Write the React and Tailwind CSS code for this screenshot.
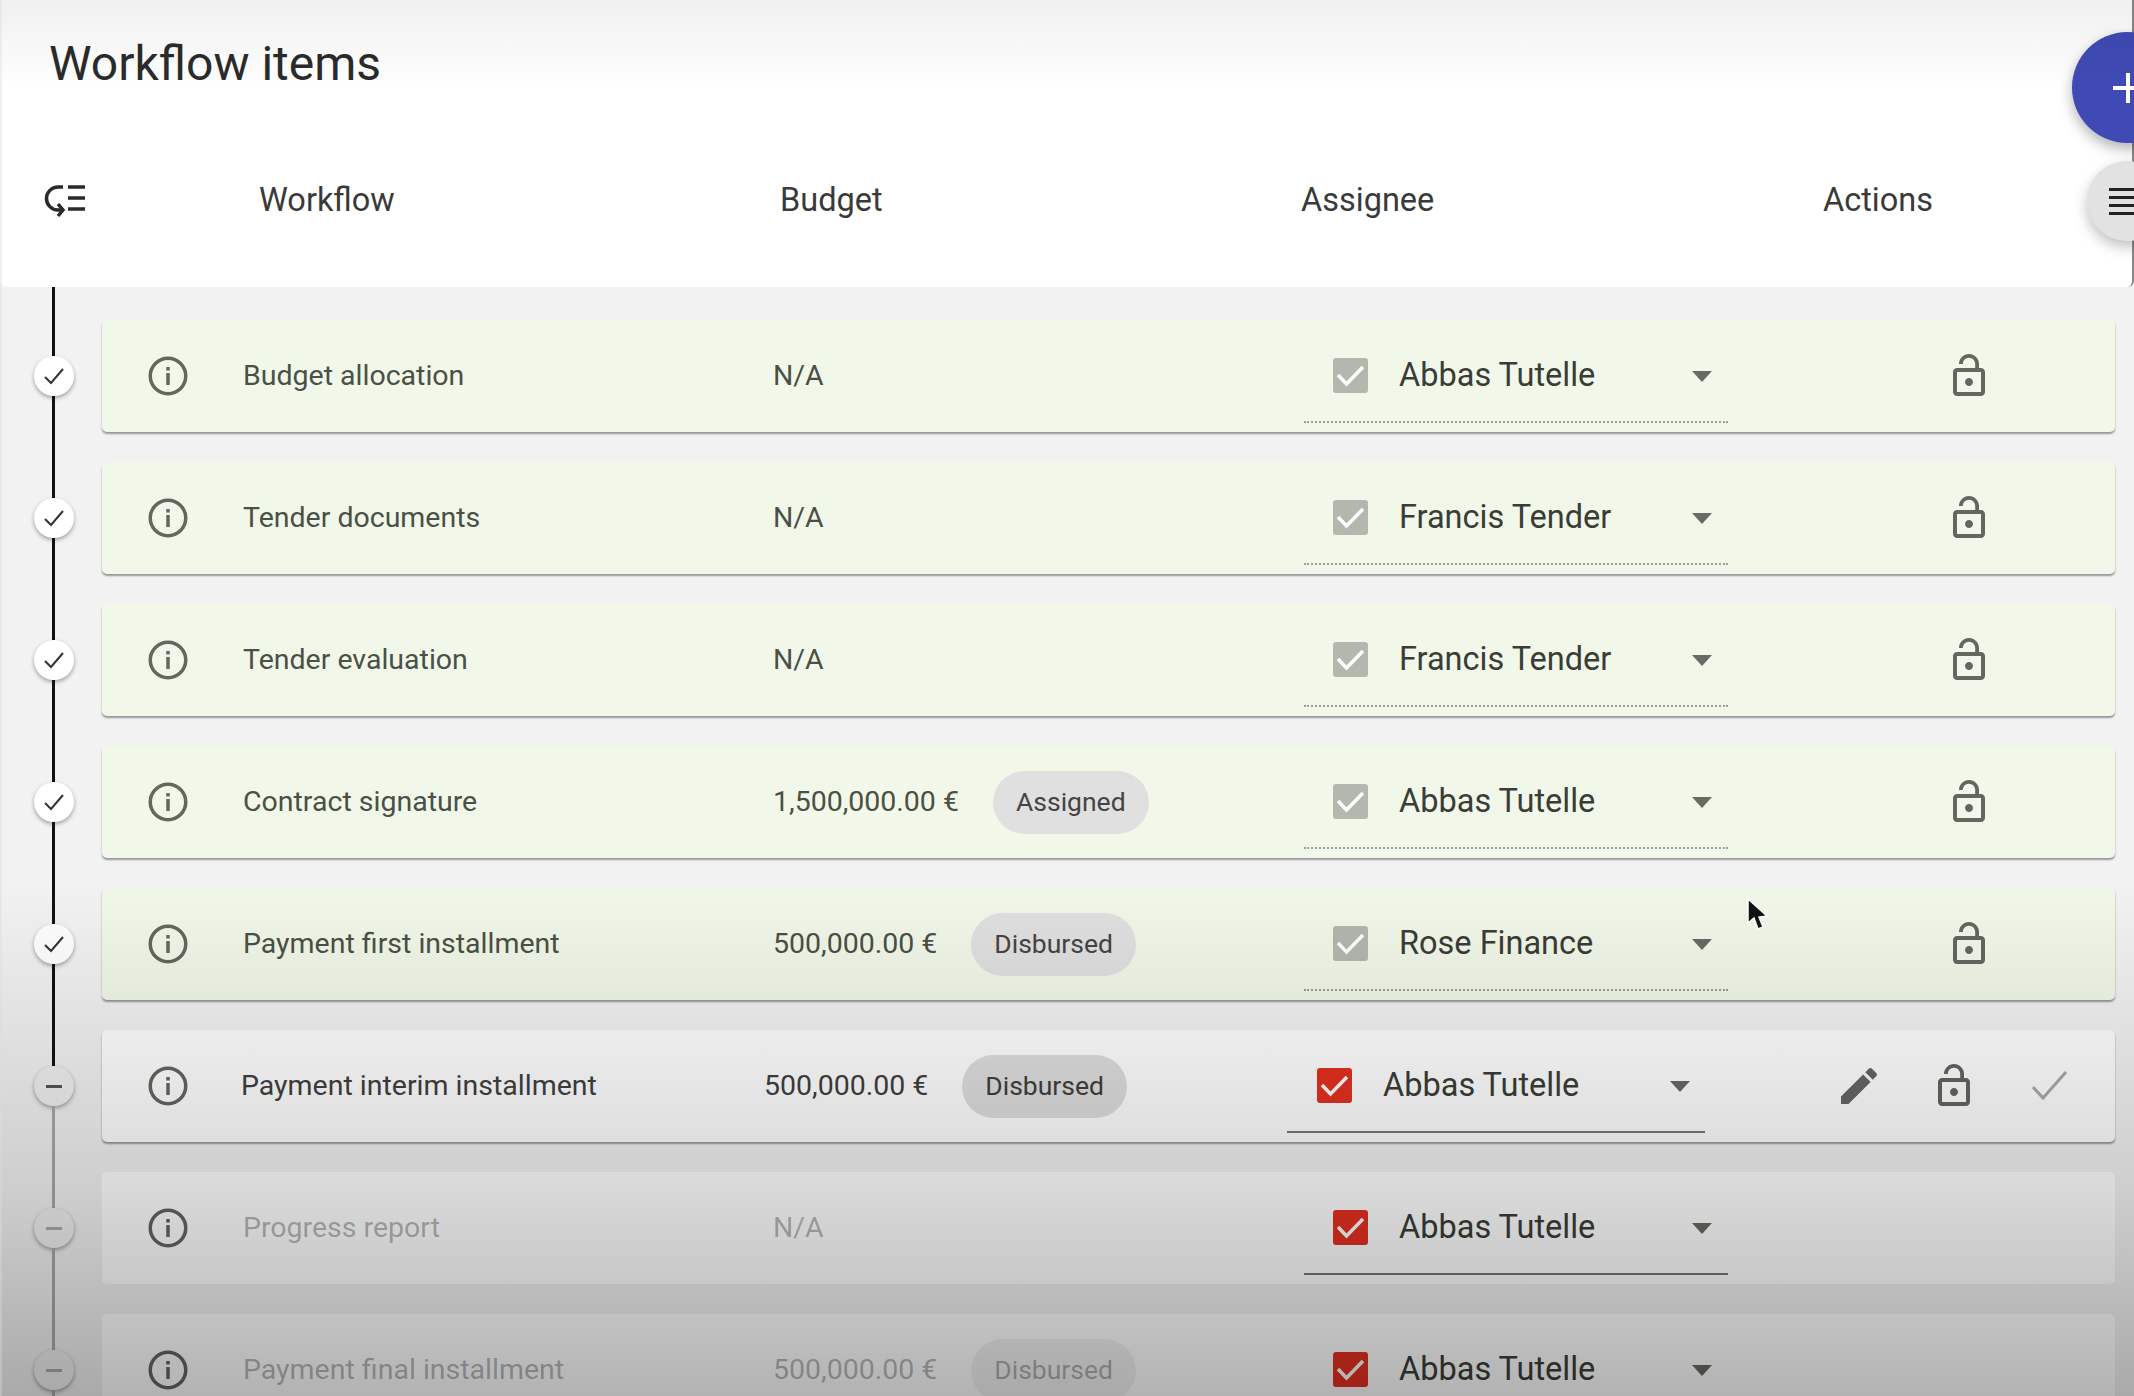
const items = [
  { name: "Budget allocation", budget: "N/A", assignee: "Abbas Tutelle", state: "done" },
  { name: "Tender documents", budget: "N/A", assignee: "Francis Tender", state: "done" },
  { name: "Tender evaluation", budget: "N/A", assignee: "Francis Tender", state: "done" },
  { name: "Contract signature", budget: "1,500,000.00 €", status: "Assigned", assignee: "Abbas Tutelle", state: "done" },
  { name: "Payment first installment", budget: "500,000.00 €", status: "Disbursed", assignee: "Rose Finance", state: "done" },
  { name: "Payment interim installment", budget: "500,000.00 €", status: "Disbursed", assignee: "Abbas Tutelle", state: "active" },
  { name: "Progress report", budget: "N/A", assignee: "Abbas Tutelle", state: "pending" },
  { name: "Payment final installment", budget: "500,000.00 €", status: "Disbursed", assignee: "Abbas Tutelle", state: "pending" },
];

function InfoIcon() {
  return (
    <svg width="40" height="40" viewBox="0 0 40 40" className="shrink-0 text-[#62675f]" fill="currentColor">
      <circle cx="20" cy="20" r="17.75" fill="none" stroke="currentColor" strokeWidth="3.5" />
      <rect x="18.25" y="11" width="3.5" height="3.5" />
      <rect x="18.25" y="17" width="3.5" height="12" />
    </svg>
  );
}

function LockIcon() {
  return (
    <svg width="48" height="48" viewBox="0 0 24 24" fill="#62675f" className="shrink-0">
      <path d="M12 17c1.1 0 2-.9 2-2s-.9-2-2-2-2 .9-2 2 .9 2 2 2zm6-9h-1V6c0-2.76-2.24-5-5-5S7 3.24 7 6h1.9c0-1.71 1.39-3.1 3.1-3.1 1.71 0 3.1 1.39 3.1 3.1v2H6c-1.1 0-2 .9-2 2v10c0 1.1.9 2 2 2h12c1.1 0 2-.9 2-2V10c0-1.1-.9-2-2-2zm0 12H6V10h12v10z" />
    </svg>
  );
}

function Dot({ state }) {
  return (
    <div className={`flex h-10 w-10 shrink-0 items-center justify-center rounded-full shadow-[0_2px_4px_rgba(0,0,0,0.35)] ${state === "done" ? "bg-white" : "bg-[#f0f0f0]"}`}>
      {state === "done" ? (
        <svg width="22" height="18" viewBox="0 0 22 18" fill="none" stroke="#333" strokeWidth="2">
          <polyline points="2,10 8,16 20,2" />
        </svg>
      ) : (
        <div className={`h-[3px] w-[16px] ${state === "active" ? "bg-[#555]" : "bg-[#aaa]"}`} />
      )}
    </div>
  );
}

function Row({ item }) {
  const { state } = item;
  const active = state === "active";
  const pending = state === "pending";
  const textColor = pending ? "text-[#000]/30" : active ? "text-[#3f3f3f]" : "text-[#4b5046]";

  return (
    <div className="flex h-[142px]">
      {/* timeline */}
      <div className="flex w-[102px] flex-col items-center pl-[5px]">
        <div className={`w-[3px] flex-1 ${pending ? "bg-[#a8a8a8]" : "bg-[#111]"}`} />
        <Dot state={state} />
        <div className={`w-[3px] flex-1 ${state === "done" ? "bg-[#111]" : "bg-[#a8a8a8]"}`} />
      </div>

      {/* card */}
      <div
        className={`my-[15px] mr-[19px] flex h-[112px] flex-1 items-start rounded-[5px] pl-[46px] ${
          state === "done" ? "bg-[#f1f8e9]" : "bg-white"
        } ${pending ? "" : "shadow-[0_2px_2px_rgba(0,0,0,0.38)]"}`}
      >
        <div className={`flex h-full items-center ${active ? "w-[93px]" : "w-[95px]"}`}>
          <InfoIcon />
        </div>
        <div className={`flex h-full items-center text-[28.5px] ${textColor} ${active ? "w-[523px]" : "w-[530px]"}`}>{item.name}</div>
        <div className={`flex h-full items-center gap-[34px] text-[28.5px] ${textColor} ${active ? "w-[523px]" : "w-[531px]"}`}>
          <span>{item.budget}</span>
          {item.status && (
            <span
              className={`flex h-[63px] items-center rounded-full px-[23px] text-[26.5px] ${
                pending ? "bg-[#000]/5" : active ? "bg-[#dedede] text-[#3f3f3f]" : "bg-[#e0e0e0] text-[#444]"
              }`}
            >
              {item.status}
            </span>
          )}
        </div>

        {/* assignee select */}
        <div
          className={`flex h-[103px] shrink-0 items-center pt-[9px] ${
            active ? "w-[418px] pl-[30px] pr-[15px]" : "w-[424px] pl-[29px] pr-[16px]"
          } ${state === "done" ? "border-b-2 border-dotted border-[#9a9f95]" : "border-b-2 border-[#777]"}`}
        >
          <div className={`flex h-[35px] w-[35px] shrink-0 items-center justify-center rounded-[3px] ${state === "done" ? "bg-[#b3b8ae]" : "bg-[#e53020]"}`}>
            <svg width="35" height="35" viewBox="0 0 35 35" fill="none" stroke="white" strokeWidth="3.5">
              <polyline points="5,17 13.5,26 30,9" />
            </svg>
          </div>
          <span className="ml-[31px] flex-1 text-[32.5px] text-[#3a3d37]">{item.assignee}</span>
          <svg width="20" height="11" viewBox="0 0 20 11" fill="#666b63" className="mt-[2px]">
            <polygon points="0,0 20,0 10,11" />
          </svg>
        </div>

        {/* actions */}
        {active && (
          <div className="flex h-full items-center gap-[47px] pl-[130px]">
            <svg width="48" height="48" viewBox="0 0 24 24" fill="#666">
              <path d="M3 17.25V21h3.75L17.81 9.94l-3.75-3.75L3 17.25zM20.71 7.04c.39-.39.39-1.02 0-1.41l-2.34-2.34c-.39-.39-1.02-.39-1.41 0l-1.83 1.83 3.75 3.75 1.83-1.83z" />
            </svg>
            <LockIcon />
            <svg width="48" height="48" viewBox="0 0 48 48" fill="none" stroke="#aaa" strokeWidth="3">
              <polyline points="8,25 18,36 41,10" />
            </svg>
          </div>
        )}
        {state === "done" && (
          <div className="flex h-full items-center pl-[217px]">
            <LockIcon />
          </div>
        )}
      </div>
    </div>
  );
}

export default function App() {
  return (
    <div className="relative h-[1396px] w-[2134px] overflow-hidden bg-[#f2f2f2] font-[Roboto,sans-serif]">
      {/* header */}
      <div className="h-[287px] rounded-b-[6px] border-r-2 border-[#888] bg-white">
        <h1 className="pl-[49px] pt-[36px] text-[48px] font-normal leading-[56px] text-[#2b2b2b]">Workflow items</h1>
        <div className="mt-[78px] flex items-center pl-[30px] text-[32.5px] text-[#3a3a3a]">
          <svg width="70" height="60" viewBox="0 0 70 60" fill="none" stroke="#2a2a2a" strokeWidth="3.5" className="shrink-0">
            <path d="M33 17 H28 A11.5 11.5 0 0 0 28 40 H32" />
            <polyline points="28,34 33,40 28,46" />
            <path d="M38 17 H55 M38 28 H55 M38 39 H55" />
          </svg>
          <span className="ml-[159px] w-[521px]">Workflow</span>
          <span className="w-[521px]">Budget</span>
          <span className="w-[522px]">Assignee</span>
          <span>Actions</span>
        </div>
      </div>

      {/* workflow list */}
      <div className="ml-[52px] h-[18px] w-[3px] bg-[#111]" />
      <div className="flex flex-col">
        {items.map((item) => (
          <Row key={item.name} item={item} />
        ))}
      </div>

      {/* floating buttons */}
      <div className="absolute left-[2072px] top-[32px] flex h-[111px] w-[111px] items-center justify-center rounded-full bg-[#3f4ab5] shadow-[0_6px_14px_rgba(0,0,0,0.3)]">
        <svg width="30" height="30" viewBox="0 0 30 30" fill="white">
          <rect x="13" y="0" width="4" height="30" />
          <rect x="0" y="13" width="30" height="4" />
        </svg>
      </div>
      <div className="absolute left-[2087px] top-[161px] flex h-[80px] w-[80px] flex-col justify-center gap-[5px] rounded-full bg-[#e2e2e2] pl-[22px] shadow-[0_6px_14px_rgba(0,0,0,0.25)]">
        <div className="h-[3px] w-[40px] bg-[#222]" />
        <div className="h-[3px] w-[40px] bg-[#222]" />
        <div className="h-[3px] w-[40px] bg-[#222]" />
        <div className="h-[3px] w-[40px] bg-[#222]" />
      </div>

      {/* mouse cursor */}
      <svg className="absolute left-[1746px] top-[897px]" width="26" height="36" viewBox="0 0 26 36">
        <path d="M2 2 L2 26 L8 21 L12 32 L17 30 L13 20 L21 19 Z" fill="#111" stroke="white" strokeWidth="1.5" />
      </svg>

      {/* video fades at top and bottom, thin edge tint on the left */}
      <div className="pointer-events-none absolute inset-x-0 top-0 h-[90px] bg-gradient-to-b from-black/[0.06] to-transparent" />
      <div className="pointer-events-none absolute inset-x-0 bottom-0 h-[516px] bg-gradient-to-b from-transparent via-black/15 via-60% to-black/30" />
      <div className="pointer-events-none absolute inset-y-0 left-0 w-[2px] bg-[#cfe0ee]/40" />
    </div>
  );
}
